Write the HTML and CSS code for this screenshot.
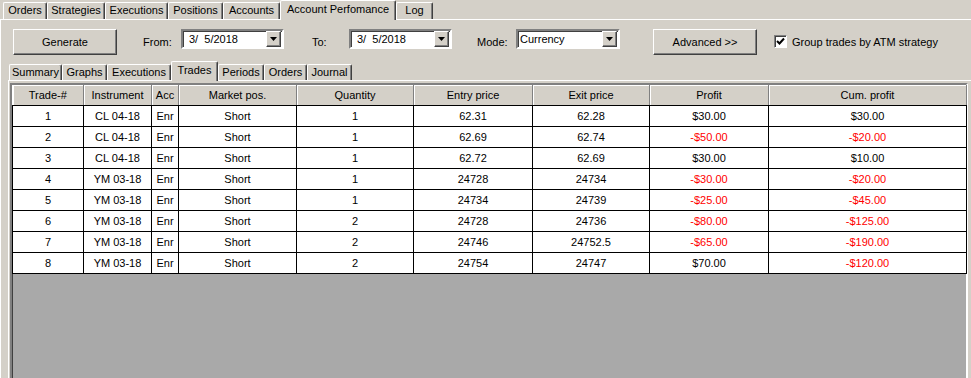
FILE: index.html
```html
<!DOCTYPE html>
<html lang="en">
<head>
    <meta charset="UTF-8">
    <title>Account Performance</title>
    <link rel="stylesheet" href="styles.css">
</head>
<body>
    <div class="main-tabs">
        <div class="tab">Orders</div>
        <div class="tab">Strategies</div>
        <div class="tab">Executions</div>
        <div class="tab">Positions</div>
        <div class="tab">Accounts</div>
        <div class="tab active">Account Perfomance</div>
        <div class="tab">Log</div>
    </div>
    <div class="panel">
        <div class="toolbar">
            <button class="btn">Generate</button>
            <span class="label label-from">From:</span>
            <div class="field">
                <span class="field-text">3/  5/2018</span>
                <span class="drop"><svg width="7" height="4" viewBox="0 0 7 4"><polygon points="0,0 7,0 3.5,4" fill="#000"/></svg></span>
            </div>
            <span class="label label-to">To:</span>
            <div class="field">
                <span class="field-text">3/  5/2018</span>
                <span class="drop"><svg width="7" height="4" viewBox="0 0 7 4"><polygon points="0,0 7,0 3.5,4" fill="#000"/></svg></span>
            </div>
            <span class="label label-mode">Mode:</span>
            <div class="field combo">
                <span class="field-text">Currency</span>
                <span class="drop"><svg width="7" height="4" viewBox="0 0 7 4"><polygon points="0,0 7,0 3.5,4" fill="#000"/></svg></span>
            </div>
            <button class="btn btn-advanced">Advanced &gt;&gt;</button>
            <label class="check-row">
                <span class="check"><svg width="9" height="9" viewBox="0 0 9 9"><path d="M1 4 L3.5 6.5 L8 1.5" stroke="#000" stroke-width="2" fill="none"/></svg></span>
                <span>Group trades by ATM strategy</span>
            </label>
        </div>

        <div class="report">
            <div class="sub-tabs">
                <div class="tab">Summary</div>
                <div class="tab">Graphs</div>
                <div class="tab">Executions</div>
                <div class="tab active">Trades</div>
                <div class="tab">Periods</div>
                <div class="tab">Orders</div>
                <div class="tab">Journal</div>
            </div>
            <div class="report-body">
                <div class="grid">
                    <table class="trades">
                        <colgroup>
                            <col class="c-num"><col class="c-inst"><col class="c-acc"><col class="c-pos"><col class="c-qty">
                            <col class="c-entry"><col class="c-exit"><col class="c-profit"><col class="c-cum">
                        </colgroup>
                        <thead>
                            <tr>
                                <th>Trade-#</th><th>Instrument</th><th>Acc</th><th>Market pos.</th><th>Quantity</th>
                                <th>Entry price</th><th>Exit price</th><th>Profit</th><th>Cum. profit</th>
                            </tr>
                        </thead>
                        <tbody>
                            <tr><td>1</td><td>CL 04-18</td><td>Enr</td><td>Short</td><td>1</td><td>62.31</td><td>62.28</td><td>$30.00</td><td>$30.00</td></tr>
                            <tr><td>2</td><td>CL 04-18</td><td>Enr</td><td>Short</td><td>1</td><td>62.69</td><td>62.74</td><td class="loss">-$50.00</td><td class="loss">-$20.00</td></tr>
                            <tr><td>3</td><td>CL 04-18</td><td>Enr</td><td>Short</td><td>1</td><td>62.72</td><td>62.69</td><td>$30.00</td><td>$10.00</td></tr>
                            <tr><td>4</td><td>YM 03-18</td><td>Enr</td><td>Short</td><td>1</td><td>24728</td><td>24734</td><td class="loss">-$30.00</td><td class="loss">-$20.00</td></tr>
                            <tr><td>5</td><td>YM 03-18</td><td>Enr</td><td>Short</td><td>1</td><td>24734</td><td>24739</td><td class="loss">-$25.00</td><td class="loss">-$45.00</td></tr>
                            <tr><td>6</td><td>YM 03-18</td><td>Enr</td><td>Short</td><td>2</td><td>24728</td><td>24736</td><td class="loss">-$80.00</td><td class="loss">-$125.00</td></tr>
                            <tr><td>7</td><td>YM 03-18</td><td>Enr</td><td>Short</td><td>2</td><td>24746</td><td>24752.5</td><td class="loss">-$65.00</td><td class="loss">-$190.00</td></tr>
                            <tr><td>8</td><td>YM 03-18</td><td>Enr</td><td>Short</td><td>2</td><td>24754</td><td>24747</td><td>$70.00</td><td class="loss">-$120.00</td></tr>
                        </tbody>
                    </table>
                </div>
            </div>
        </div>
    </div>
</body>
</html>
```

FILE: styles.css
```css
* {
    box-sizing: border-box;
}

body {
    margin: 0;
    height: 378px;
    overflow: hidden;
    background: #d4d0c8;
    font-family: "Liberation Sans", Arial, sans-serif;
    font-size: 11px;
    color: #000;
}

/* tab strips */
.main-tabs,
.sub-tabs {
    display: flex;
    align-items: flex-end;
}

.main-tabs {
    height: 19px;
    padding-left: 3px;
}

.tab {
    height: 17px;
    line-height: 15px;
    text-align: center;
    white-space: nowrap;
    background: #d4d0c8;
    border-top: 1px solid #fff;
    border-left: 1px solid #fff;
    border-right: 1px solid #404040;
    border-radius: 2px 2px 0 0;
    box-shadow: inset -1px 0 #808080;
}

.tab.active {
    position: relative;
    z-index: 1;
    height: 20px;
    margin-bottom: -1px;
    line-height: 16px;
}

.main-tabs .tab:nth-child(1) { width: 44px; }
.main-tabs .tab:nth-child(2) { width: 58px; }
.main-tabs .tab:nth-child(3) { width: 63px; }
.main-tabs .tab:nth-child(4) { width: 55px; }
.main-tabs .tab:nth-child(5) { width: 57px; }
.main-tabs .tab:nth-child(6) { width: 116px; }
.main-tabs .tab:nth-child(7) { width: 37px; }

.sub-tabs {
    height: 19px;
    margin-top: 6px;
    padding-left: 1px;
}

.sub-tabs .tab { height: 16px; }
.sub-tabs .tab.active { height: 20px; }

.sub-tabs .tab:nth-child(1) { width: 53px; }
.sub-tabs .tab:nth-child(2) { width: 45px; }
.sub-tabs .tab:nth-child(3) { width: 64px; }
.sub-tabs .tab:nth-child(4) { width: 47px; }
.sub-tabs .tab:nth-child(5) { width: 46px; }
.sub-tabs .tab:nth-child(6) { width: 43px; }
.sub-tabs .tab:nth-child(7) { width: 45px; }

.panel {
    border-top: 1px solid #fff;
    border-left: 1px solid #fff;
}

/* toolbar */
.toolbar {
    display: flex;
    align-items: flex-start;
    height: 26px;
    margin: 9px 0 0 12px;
}

.btn {
    width: 104px;
    height: 26px;
    padding: 0;
    font: inherit;
    color: #000;
    background: #d4d0c8;
    border: 1px solid;
    border-color: #fff #404040 #404040 #fff;
    box-shadow: inset -1px -1px #808080;
}

.btn-advanced {
    margin-left: 33px;
}

.label {
    line-height: 26px;
}

.label-from { width: 38px; margin-left: 26px; }
.label-to { width: 37px; margin-left: 28px; }
.label-mode { width: 39px; margin-left: 25px; }

.field {
    display: flex;
    align-items: center;
    justify-content: space-between;
    width: 103px;
    height: 20px;
    padding: 0 1px 0 6px;
    background: #fff;
    border: 2px solid;
    border-color: #808080 #fff #fff #808080;
    box-shadow: inset 1px 1px #404040;
}

.combo {
    width: 104px;
    padding-left: 2px;
}

.field-text {
    white-space: pre;
}

.drop {
    display: flex;
    align-items: center;
    justify-content: center;
    width: 15px;
    height: 16px;
    background: #d4d0c8;
    border: 1px solid;
    border-color: #fff #404040 #404040 #fff;
    box-shadow: inset -1px -1px #808080;
}

.check-row {
    display: flex;
    align-items: center;
    gap: 5px;
    margin: 6px 0 0 17px;
}

.check {
    display: flex;
    align-items: center;
    justify-content: center;
    width: 13px;
    height: 13px;
    background: #fff;
    border: 1px solid;
    border-color: #808080 #fff #fff #808080;
    box-shadow: inset 1px 1px #404040;
}

/* report area */
.report {
    margin-left: 7px;
}

.report-body {
    border-top: 1px solid #fff;
    border-left: 1px solid #fff;
    padding: 2px 0 0 1px;
}

.grid {
    width: 958px;
    height: 300px;
    background: #a9a9a9;
    border: 2px solid;
    border-color: #808080 #fff #fff #808080;
    box-shadow: inset 1px 1px #404040;
}

.trades {
    width: 954px;
    table-layout: fixed;
    border-collapse: collapse;
    background: #fff;
}

.c-num { width: 71px; }
.c-inst { width: 68px; }
.c-acc { width: 27px; }
.c-pos { width: 118px; }
.c-qty { width: 117px; }
.c-entry { width: 119px; }
.c-exit { width: 117px; }
.c-profit { width: 119px; }
.c-cum { width: 198px; }

.trades th {
    height: 20px;
    padding: 0;
    font-weight: normal;
    background: #d4d0c8;
    border-right: 1px solid #808080;
    border-bottom: 1px solid #000;
    box-shadow: inset 1px 1px #fff;
}

.trades td {
    height: 21px;
    padding: 0;
    text-align: center;
    border: 1px solid #000;
}

.trades td.loss {
    color: #f00;
}
```
